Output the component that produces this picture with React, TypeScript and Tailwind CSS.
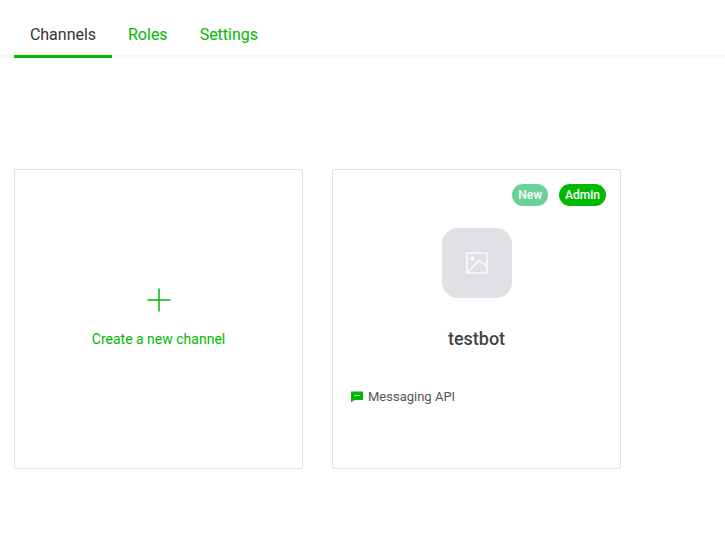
const NewChannelCard = () => (
  <div className="w-[289px] h-[300px] border border-[#dfe1e5] rounded-[2px] flex flex-col items-center">
    <svg className="mt-[118px] block" width="24" height="24" viewBox="0 0 24 24" fill="none" stroke="#00b900" strokeWidth="1.5">
      <path d="M12 0.5V23.5M0.5 12H23.5" />
    </svg>
    <div className="mt-[17px] text-[14px] leading-[20px] text-[#00b900]">Create a new channel</div>
  </div>
);

const ChannelCard = () => (
  <div className="relative w-[289px] h-[300px] border border-[#dfe1e5] rounded-[2px] flex flex-col">
    {/* Badges */}
    <div className="absolute top-[14px] right-[14px] flex gap-[11px]">
      <span className="h-[22px] px-[6px] rounded-full bg-[#69d295] text-white text-[12px] font-medium leading-[22px]">New</span>
      <span className="h-[22px] px-[6px] rounded-full bg-[#00b900] text-white text-[12px] font-medium leading-[22px]">Admin</span>
    </div>

    <div className="mt-[58px] self-center w-[70px] h-[70px] rounded-[16px] bg-[#dfe1e5] flex items-center justify-center">
      <svg width="22" height="22" viewBox="0 0 22 22" fill="none" stroke="#ffffff" strokeWidth="1.2">
        <rect x="1" y="1" width="20" height="20" />
        <circle cx="6.4" cy="6.6" r="1.8" fill="#ffffff" stroke="none" />
        <path d="M1.5 20.5L13 8.5L21 14.5" />
      </svg>
    </div>

    <div className="mt-[29px] text-center text-[18px] leading-[24px] font-medium text-[#444444]">testbot</div>

    <div className="mt-[37px] ml-[18px] flex items-center gap-[5px]">
      <svg width="12" height="12" viewBox="0 0 12 12" className="block">
        <path d="M0 0.5H12V9H3.5L0 11.5Z" fill="#00b900" />
        <path d="M3.5 4.5H5M5.5 4.5H7M7.5 4.5H9" stroke="#ffffff" strokeWidth="1" />
      </svg>
      <span className="text-[13px] leading-[18px] text-[#555555]">Messaging API</span>
    </div>
  </div>
);

export default function App() {
  return (
    <div className="w-[725px] h-[544px] bg-white overflow-hidden font-['Roboto',sans-serif]">
      <div className="h-[58px] pl-[14px] flex items-end border-b-[3px] border-[#f7f7f7]">
        <div className="w-[98px] h-[58px] -mb-[3px] pt-[15px] border-b-[3px] border-[#00b900] flex items-center justify-center text-[16px] text-[#333333]">
          Channels
        </div>
        <div className="h-[58px] -mb-[3px] pt-[15px] border-b-[3px] border-transparent ml-[16px] flex items-center text-[16px] text-[#00b900]">Roles</div>
        <div className="h-[58px] -mb-[3px] pt-[15px] border-b-[3px] border-transparent ml-[32px] flex items-center text-[16px] text-[#00b900]">Settings</div>
      </div>

      <div className="mt-[111px] pl-[14px] flex gap-[29px]">
        <NewChannelCard />
        <ChannelCard />
      </div>
    </div>
  );
}
